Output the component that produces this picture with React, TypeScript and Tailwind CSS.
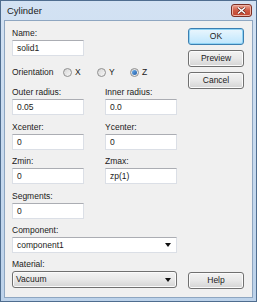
import React from 'react';

const font = { fontFamily: '"Liberation Sans", Arial, sans-serif' };

function Label({ children }: { children: React.ReactNode }) {
  return <div className="mb-[1px] h-[12px] leading-[12px] text-[8.5px] text-[#1b1b1b]">{children}</div>;
}

function TextBox({ value, wide }: { value: string; wide?: boolean }) {
  return (
    <div
      className={`flex h-[16px] items-center border border-[#dbdfe6] border-t-[#abadb3] bg-white pl-[4px] text-[8.5px] text-[#1b1b1b] ${
        wide ? 'w-[165px]' : 'w-[72px]'
      }`}
    >
      {value}
    </div>
  );
}

function Field({ label, value }: { label: string; value: string }) {
  return (
    <div className="w-[72px]">
      <Label>{label}</Label>
      <TextBox value={value} />
    </div>
  );
}

function Arrow() {
  return (
    <svg width="6" height="4" viewBox="0 0 6 4" className="mr-[5px]">
      <path d="M0 0 H6 L3 4 Z" fill="#111" />
    </svg>
  );
}

function Radio({ label, checked }: { label: string; checked?: boolean }) {
  return (
    <div className="flex items-center gap-[3px]">
      <span className="flex h-[9px] w-[9px] items-center justify-center rounded-full border border-[#8f8f8f] bg-gradient-to-br from-[#d6d6d6] to-[#f7f7f7]">
        {checked && <span className="h-[5px] w-[5px] rounded-full bg-gradient-to-br from-[#6fb0ec] to-[#1e5ca8]" />}
      </span>
      <span className="text-[8.5px] text-[#1b1b1b]">{label}</span>
    </div>
  );
}

function Button({ children, primary }: { children: React.ReactNode; primary?: boolean }) {
  return (
    <div
      className={`flex h-[17px] w-[56px] items-center justify-center rounded-[3px] border text-[8.5px] text-[#1b1b1b] ${
        primary
          ? 'border-[#3c7fb1] bg-gradient-to-b from-[#eaf6fd] to-[#bee6fd] shadow-[inset_0_0_0_1px_#8ed3f5]'
          : 'border-[#707070] bg-gradient-to-b from-[#f3f3f3] via-[#e8e8e8] to-[#d4d4d4] shadow-[inset_0_0_0_1px_#fbfbfb]'
      }`}
    >
      {children}
    </div>
  );
}

export default function App() {
  return (
    <div style={font} className="h-[302px] w-[257px] overflow-hidden">
      <div className="flex h-[302px] w-[257px] flex-col border border-[#4f6d8f] bg-gradient-to-b from-[#d3e2f3] to-[#bcd2ea]">
        {/* title bar */}
        <div className="flex h-[19px] items-start justify-between pl-[6px] pr-[4px]">
          <span className="mt-[4px] text-[9.5px] leading-[11px] text-[#1a1a1a]">Cylinder</span>
          <div className="mt-[3px] flex h-[13px] w-[21px] items-center justify-center rounded-[3px] border border-[#7d2f24] bg-gradient-to-b from-[#e8a493] via-[#cf5b45] to-[#c0412c] shadow-[inset_0_0_0_1px_#eeb3a5]">
            <svg width="9" height="7" viewBox="0 0 9 7">
              <path d="M1 0.5 L8 6.5 M8 0.5 L1 6.5" stroke="#5a1a12" strokeWidth="2.6" />
              <path d="M1 0.5 L8 6.5 M8 0.5 L1 6.5" stroke="#ffffff" strokeWidth="1.5" />
            </svg>
          </div>
        </div>

        {/* client area */}
        <div className="mx-[3px] mb-[3px] flex flex-1 border border-[#8ea6c1] bg-[#f0f0f0]">
          <div className="w-[172px] pl-[7px] pt-[6px]">
            <Label>Name:</Label>
            <TextBox value="solid1" />

            <div className="mt-[9px] flex h-[14px] items-center">
              <span className="w-[51px] text-[8.5px] text-[#1b1b1b]">Orientation</span>
              <div className="w-[34px]">
                <Radio label="X" />
              </div>
              <div className="w-[33px]">
                <Radio label="Y" />
              </div>
              <Radio label="Z" checked />
            </div>

            <div className="mt-[7px] flex gap-[21px]">
              <Field label="Outer radius:" value="0.05" />
              <Field label="Inner radius:" value="0.0" />
            </div>
            <div className="mt-[6px] flex gap-[21px]">
              <Field label="Xcenter:" value="0" />
              <Field label="Ycenter:" value="0" />
            </div>
            <div className="mt-[5px] flex gap-[21px]">
              <Field label="Zmin:" value="0" />
              <Field label="Zmax:" value="zp(1)" />
            </div>
            <div className="mt-[6px]">
              <Field label="Segments:" value="0" />
            </div>

            <div className="mt-[5px]">
              <Label>Component:</Label>
              <div className="flex h-[16px] w-[165px] items-center justify-between border border-[#dbdfe6] border-t-[#abadb3] bg-white pl-[4px] text-[8.5px] text-[#1b1b1b]">
                component1
                <Arrow />
              </div>
            </div>

            <div className="mt-[5px]">
              <Label>Material:</Label>
              <div className="flex h-[17px] w-[165px] items-center justify-between rounded-[3px] border border-[#707070] bg-gradient-to-b from-[#f3f3f3] via-[#e8e8e8] to-[#d4d4d4] pl-[3px] text-[8.5px] text-[#1b1b1b] shadow-[inset_0_0_0_1px_#fbfbfb]">
                Vacuum
                <Arrow />
              </div>
            </div>
          </div>

          <div className="ml-[11px] flex flex-col gap-[5px] pb-[8px] pt-[7px]">
            <Button primary>OK</Button>
            <Button>Preview</Button>
            <Button>Cancel</Button>
            <div className="mt-auto">
              <Button>Help</Button>
            </div>
          </div>
        </div>
      </div>
    </div>
  );
}
